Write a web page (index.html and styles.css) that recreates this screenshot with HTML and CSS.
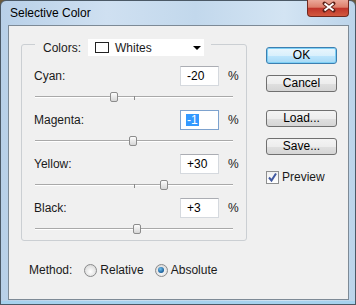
FILE: index.html
```html
<!DOCTYPE html>
<html>
	<head>
		<title>Selective Color</title>
		<link rel="stylesheet" href="styles.css">
	</head>

	<body>
		<div class="window">
			<div class="titlebar">
				<span class="title">Selective Color</span>
				<div class="close">
					<svg width="42" height="16" viewBox="0 0 42 16">
						<path d="M16.5 3.5 L25.5 10.5 M25.5 3.5 L16.5 10.5" stroke="#5e2118" stroke-width="4" stroke-linecap="round"/>
						<path d="M16.5 3.5 L25.5 10.5 M25.5 3.5 L16.5 10.5" stroke="#ffffff" stroke-width="2"/>
					</svg>
				</div>
			</div>

			<div class="client">
				<div class="main">
					<div class="group">
						<div class="legend">
							<span class="colors-label">Colors:</span>
							<div class="select">
								<span class="swatch"></span>
								<span>Whites</span>
								<span class="arrow"></span>
							</div>
						</div>

						<div class="channels">
							<div class="channel">
								<div class="channel-row">
									<span class="name">Cyan:</span>
									<div class="field">-20</div>
									<span class="pct">%</span>
								</div>
								<div class="slider">
									<div class="track"></div>
									<span class="tick"></span>
									<span class="thumb" style="left: 75px"></span>
								</div>
							</div>

							<div class="channel">
								<div class="channel-row">
									<span class="name">Magenta:</span>
									<div class="field focused"><span class="sel">-1</span></div>
									<span class="pct">%</span>
								</div>
								<div class="slider">
									<div class="track"></div>
									<span class="tick"></span>
									<span class="thumb" style="left: 94px"></span>
								</div>
							</div>

							<div class="channel">
								<div class="channel-row">
									<span class="name">Yellow:</span>
									<div class="field">+30</div>
									<span class="pct">%</span>
								</div>
								<div class="slider">
									<div class="track"></div>
									<span class="tick"></span>
									<span class="thumb" style="left: 125px"></span>
								</div>
							</div>

							<div class="channel">
								<div class="channel-row">
									<span class="name">Black:</span>
									<div class="field">+3</div>
									<span class="pct">%</span>
								</div>
								<div class="slider">
									<div class="track"></div>
									<span class="tick"></span>
									<span class="thumb" style="left: 98px"></span>
								</div>
							</div>
						</div>
					</div>

					<div class="method">
						<span>Method:</span>
						<span class="radio first"></span>
						<span class="radio-text">Relative</span>
						<span class="radio checked"></span>
						<span class="radio-text">Absolute</span>
					</div>
				</div>

				<div class="buttons">
					<div class="btn default">OK</div>
					<div class="btn cancel">Cancel</div>
					<div class="btn load">Load...</div>
					<div class="btn save">Save...</div>
					<div class="preview">
						<span class="checkbox">
							<svg width="11" height="11" viewBox="0 0 11 11">
								<path d="M2 5.5 L4.5 8.5 L9 1.5" fill="none" stroke="#4058a0" stroke-width="2"/>
							</svg>
						</span>
						<span>Preview</span>
					</div>
				</div>
			</div>
		</div>
	</body>
</html>
```

FILE: styles.css
```css
		body {
			margin: 0;
			background: #6b5a3c;
			font-family: "Liberation Sans", Arial, sans-serif;
			font-size: 12px;
			color: #1a1a1a;
		}

		.window {
			width: 356px;
			height: 305px;
			box-sizing: border-box;
			border: 1px solid #4b5966;
			border-radius: 6px 6px 0 0;
			padding: 0 6px 4px 7px;
			display: flex;
			flex-direction: column;
			background: linear-gradient(90deg, #b8d0e8 0%, #cfe0f1 30%, #c2d8ec 55%, #d3e4f3 80%, #bcd4ea 100%);
			box-shadow: inset 0 -3px 0 #a6d2ee;
		}

		.titlebar {
			height: 24px;
			display: flex;
			align-items: flex-start;
		}

		.title {
			margin: 5px 0 0 2px;
			line-height: 14px;
			color: #000;
		}

		.close {
			margin-left: auto;
			margin-top: -1px;
			width: 42px;
			height: 17px;
			box-sizing: border-box;
			border: 1px solid #70291f;
			border-top: none;
			border-radius: 0 0 4px 4px;
			background: linear-gradient(#eba99a 0%, #dd7f6b 45%, #c0352a 52%, #d2583e 100%);
		}

		.close svg {
			display: block;
		}

		.client {
			flex: 1;
			display: flex;
			border: 1px solid #7d8a96;
			background: #f0f0f0;
		}

		.main {
			padding: 18px 0 0 12px;
		}

		.group {
			width: 226px;
			box-sizing: border-box;
			border: 1px solid #cbcfd3;
			border-radius: 3px;
		}

		.legend {
			display: flex;
			align-items: center;
			width: fit-content;
			height: 17px;
			margin: -6px 0 0 13px;
			padding: 0 7px 0 8px;
			background: #f0f0f0;
		}

		.colors-label {
			margin-right: 7px;
		}

		.select {
			width: 116px;
			height: 17px;
			box-sizing: border-box;
			padding-left: 7px;
			display: flex;
			align-items: center;
			background: #fff;
		}

		.swatch {
			width: 14px;
			height: 11px;
			box-sizing: border-box;
			border: 1px solid #222;
			margin-right: 6px;
		}

		.arrow {
			margin-left: auto;
			margin-right: 3px;
			border-left: 4px solid transparent;
			border-right: 4px solid transparent;
			border-top: 4px solid #000;
		}

		.channels {
			padding: 10px 0 0 12px;
			display: flex;
			flex-direction: column;
			gap: 2px;
		}

		.channel-row {
			display: flex;
			align-items: center;
			height: 20px;
		}

		.name {
			width: 146px;
		}

		.field {
			width: 39px;
			height: 20px;
			box-sizing: border-box;
			border: 1px solid #d5d9de;
			border-top-color: #abadb3;
			background: #fff;
			padding-left: 6px;
			line-height: 18px;
			color: #000;
		}

		.field.focused {
			border-color: #7da2ce;
			padding-left: 5px;
		}

		.sel {
			display: inline-block;
			line-height: 12px;
			padding: 0 1px;
			background: #3399ff;
			color: #fff;
		}

		.pct {
			margin-left: 9px;
		}

		.slider {
			position: relative;
			width: 198px;
			height: 22px;
			box-sizing: border-box;
			padding-top: 10px;
			margin-left: 1px;
		}

		.track {
			height: 1px;
			background: #a9a9a9;
			border-bottom: 1px solid #fff;
		}

		.tick {
			position: absolute;
			left: 99px;
			top: 10px;
			width: 1px;
			height: 4px;
			background: #8a8a8a;
		}

		.thumb {
			position: absolute;
			top: 6px;
			width: 8px;
			height: 10px;
			box-sizing: border-box;
			border: 1px solid #8c8c8c;
			border-radius: 2px;
			background: linear-gradient(#fdfdfd, #d6d6d6);
		}

		.method {
			display: flex;
			align-items: center;
			height: 16px;
			margin: 21px 0 0 8px;
		}

		.radio {
			width: 13px;
			height: 13px;
			box-sizing: border-box;
			border: 1px solid #8a8b8c;
			border-radius: 50%;
			background: radial-gradient(circle at 50% 60%, #ffffff, #d0d0d0);
			margin-left: 11px;
			display: flex;
			align-items: center;
			justify-content: center;
		}

		.radio.first {
			margin-left: 12px;
		}

		.radio.checked::after {
			content: "";
			width: 6px;
			height: 6px;
			border-radius: 50%;
			background: radial-gradient(circle at 40% 35%, #6fc0ef, #0d4f8c 80%);
		}

		.radio-text {
			margin-left: 3px;
		}

		.buttons {
			display: flex;
			flex-direction: column;
			margin-left: 19px;
			padding-top: 21px;
		}

		.btn {
			width: 71px;
			height: 17px;
			box-sizing: border-box;
			border: 1px solid #707070;
			border-radius: 3px;
			background: linear-gradient(#f4f4f4 0%, #ededed 50%, #e0e0e0 51%, #d5d5d5 100%);
			text-align: center;
			line-height: 15px;
			color: #000;
		}

		.btn.default {
			border-color: #3c7fb1;
			background: linear-gradient(#eaf6fd 0%, #d9f0fc 50%, #bee6fd 51%, #a7d9f5 100%);
			box-shadow: inset 0 0 0 1px #7fd0f5;
		}

		.cancel {
			margin-top: 11px;
		}

		.load {
			margin-top: 18px;
		}

		.save {
			margin-top: 11px;
		}

		.preview {
			display: flex;
			align-items: center;
			margin-top: 15px;
			gap: 3px;
		}

		.checkbox {
			width: 13px;
			height: 13px;
			box-sizing: border-box;
			border: 1px solid #8e8f8f;
			background: linear-gradient(#f0f0f0, #ffffff);
			display: flex;
		}
```
